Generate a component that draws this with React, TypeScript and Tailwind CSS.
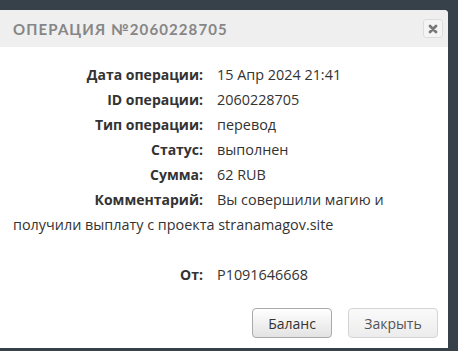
import React from 'react'

const rows: [string, string][] = [
  ['Дата операции:', '15 Апр 2024 21:41'],
  ['ID операции:', '2060228705'],
  ['Тип операции:', 'перевод'],
  ['Статус:', 'выполнен'],
  ['Сумма:', '62 RUB'],
]

const Row = ({ label, children }: { label: string; children: React.ReactNode }) => (
  <div>
    <span className="inline-block w-[190px] text-right font-bold text-[14px] mr-[14px]">{label}</span>
    {children}
  </div>
)

export default function App() {
  return (
    <div className="w-[458px] h-[351px] bg-[#36414a] pt-[10px] overflow-hidden">
      <div className="w-[448px] h-[338px] bg-white rounded-tr-[4px] flex flex-col">
        {/* header */}
        <div className="h-[37px] bg-[#efefef] rounded-tr-[4px] flex items-center justify-between pl-[13px] pr-[5px]">
          <span className="font-['Lato',sans-serif] font-bold text-[15px] tracking-[1.1px] text-[#868686] pt-[1px]">
            ОПЕРАЦИЯ №2060228705
          </span>
          <button className="w-[20px] h-[19px] rounded-[3px] border border-[#dcdcdc] bg-[#f4f4f4] flex items-center justify-center">
            <svg width="10" height="10" viewBox="0 0 10 10">
              <path d="M2 2 L8 8 M8 2 L2 8" stroke="#777" strokeWidth="2.8" strokeLinecap="round" />
            </svg>
          </button>
        </div>

        {/* body */}
        <div className="flex-1 px-[13px] pt-[15px] font-['Open_Sans',sans-serif] text-[14.4px] leading-[25px] text-[#333]">
          {rows.map(([l, v]) => (
            <Row key={l} label={l}>{v}</Row>
          ))}
          <Row label="Комментарий:">Вы совершили магию и получили выплату с проекта stranamagov.site</Row>
          <div className="h-[25px]" />
          <Row label="От:">P1091646668</Row>
        </div>

        {/* footer */}
        <div className="flex justify-end gap-[16px] pr-[10px] pb-[10px] font-['Open_Sans',sans-serif] text-[14px]">
          <button className="w-[80px] h-[30px] rounded-[4px] border border-[#a9a9a9] bg-gradient-to-b from-[#ffffff] to-[#e3e3e3] text-[#333]">
            Баланс
          </button>
          <button className="w-[90px] h-[30px] rounded-[4px] border border-[#d4d4d4] bg-gradient-to-b from-[#fafafa] to-[#ececec] text-[#555]">
            Закрыть
          </button>
        </div>
      </div>
    </div>
  )
}
